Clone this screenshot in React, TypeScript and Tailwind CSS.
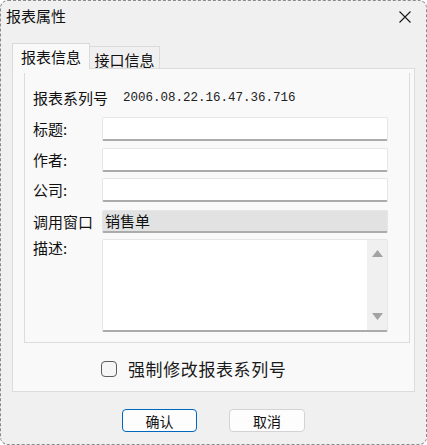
import React from "react";

const cjk = { fontFamily: "'Noto Sans CJK SC', 'Noto Sans', sans-serif" };

function Field({ className = "", children }: { className?: string; children?: React.ReactNode }) {
  return (
    <div
      className={`w-[286px] h-[24px] border border-[#e6e6e6] border-b-2 border-b-[#ababab] rounded-[2px] ${className}`}
    >
      {children}
    </div>
  );
}

function Label({ children }: { children: React.ReactNode }) {
  return <div className="w-[69px] text-[15px] leading-[18px] text-[#111]">{children}</div>;
}

export default function App() {
  return (
    <div
      className="w-[427px] h-[445px] bg-[#f0f0f0] border border-dashed border-[#8a8a8a] rounded-[8px] flex flex-col overflow-hidden text-[#111]"
      style={cjk}
    >
      {/* title bar */}
      <div className="h-[32px] flex items-center justify-between pl-[5px] pr-[15px]">
        <span className="text-[15px] leading-[18px] mt-[-2px]">报表属性</span>
        <svg width="12" height="12" viewBox="0 0 12 12" className="mt-[-1px]">
          <path d="M0.5 0.5 L11.5 11.5 M11.5 0.5 L0.5 11.5" stroke="#1a1a1a" strokeWidth="1.1" fill="none" />
        </svg>
      </div>

      {/* tabs */}
      <div className="flex items-end h-[35px] pl-[11px]">
        <div className="relative z-10 h-[26px] -mb-px w-[78px] bg-[#f9f9f9] border border-b-0 border-[#dadada] flex items-center justify-center pt-[2px] text-[15px]">
          报表信息
        </div>
        <div className="h-[22px] w-[70px] bg-[#f0f0f0] border border-l-0 border-b-0 border-[#dadada] flex items-center justify-center pt-[5px] text-[15px]">
          接口信息
        </div>
      </div>

      {/* panel */}
      <div className="mx-[11px] h-[324px] bg-[#f9f9f9] border border-[#dcdcdc] flex flex-col">
        <div className="ml-[11px] mr-[4px] mt-[4px] h-[270px] border border-t-0 border-[#dcdcdc] pt-[13px] pl-[8px] flex flex-col">
          <div className="h-[24px] flex items-center">
            <span className="text-[15px] leading-[18px] w-[90px]">报表系列号</span>
            <span
              className="text-[12.5px] leading-[16px] text-[#222]"
              style={{ fontFamily: "'Liberation Mono', monospace" }}
            >
              2006.08.22.16.47.36.716
            </span>
          </div>

          <div className="mt-[7px] flex items-center">
            <Label>标题:</Label>
            <Field className="bg-white" />
          </div>
          <div className="mt-[7px] flex items-center">
            <Label>作者:</Label>
            <Field className="bg-white" />
          </div>
          <div className="mt-[6px] flex items-center">
            <Label>公司:</Label>
            <Field className="bg-white" />
          </div>
          <div className="mt-[8px] flex items-center">
            <Label>调用窗口</Label>
            <div className="w-[286px] h-[23px] bg-[#e2e2e2] border border-[#e6e6e6] border-b-2 border-b-[#ababab] rounded-[2px] flex items-center pl-[2px] text-[15px] leading-[18px]">
              销售单
            </div>
          </div>
          <div className="mt-[6px] flex items-start">
            <Label>描述:</Label>
            <div className="w-[286px] h-[93px] bg-white border border-[#e6e6e6] border-b-2 border-b-[#ababab] rounded-[2px] flex justify-end">
              <div className="w-[20px] h-full bg-[#f0f0f0] flex flex-col items-center justify-between py-[10px]">
                <svg width="11" height="7" viewBox="0 0 11 7">
                  <path d="M5.5 0 L11 7 L0 7 Z" fill="#a3a3a3" />
                </svg>
                <svg width="11" height="7" viewBox="0 0 11 7">
                  <path d="M0 0 L11 0 L5.5 7 Z" fill="#a3a3a3" />
                </svg>
              </div>
            </div>
          </div>
        </div>

        <div className="mt-[16px] pl-[88px] flex items-center">
          <div className="w-[16px] h-[16px] rounded-[4px] border-[1.5px] border-[#5c5c5c] bg-[#f6f6f6]" />
          <span className="ml-[11px] text-[17px] leading-[20px] tracking-[0.6px] text-[#1a1a1a]">强制修改报表系列号</span>
        </div>
      </div>

      {/* buttons */}
      <div className="mt-[17px] flex justify-center gap-[32px]">
        <div className="w-[75px] h-[23px] rounded-[4px] border-[1.5px] border-[#0067c0] bg-[#fdfdfd] flex items-center justify-center text-[14px] leading-[16px]">
          确认
        </div>
        <div className="w-[76px] h-[23px] rounded-[4px] border border-[#d3d3d3] bg-[#fdfdfd] flex items-center justify-center text-[14px] leading-[16px]">
          取消
        </div>
      </div>
    </div>
  );
}
